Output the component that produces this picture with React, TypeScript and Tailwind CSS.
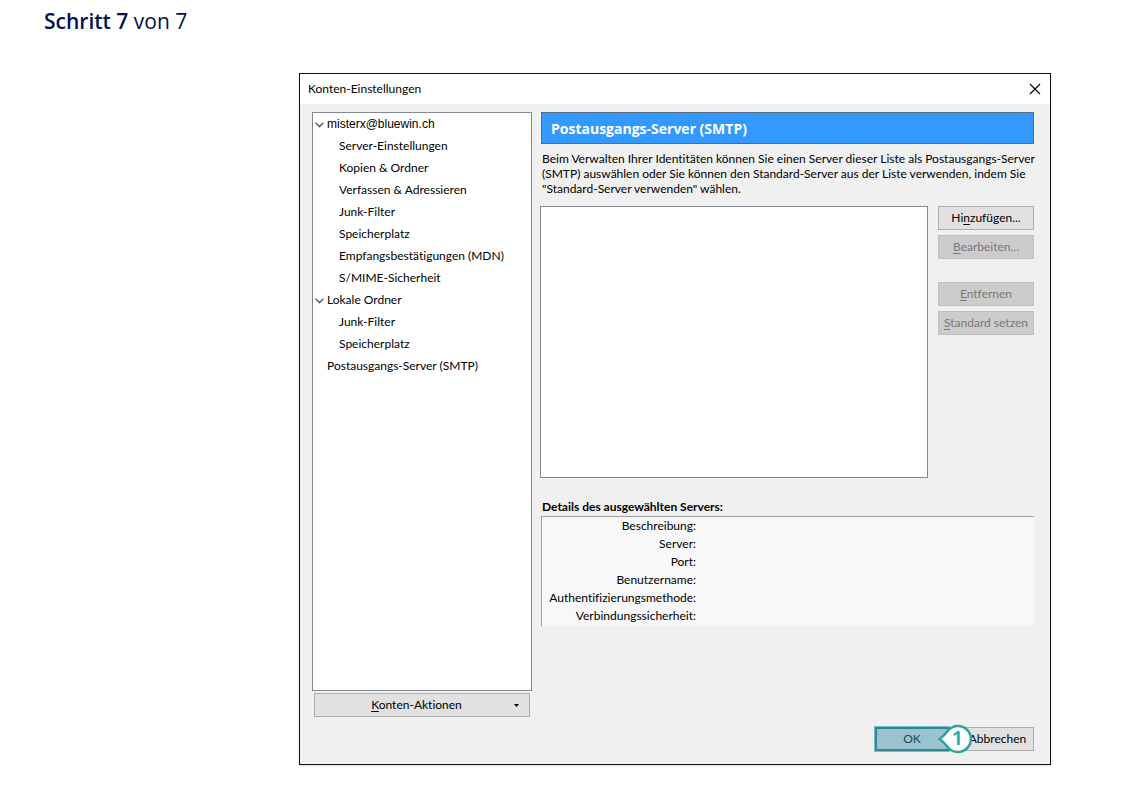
import React from "react";
import clsx from "clsx";

type Account = {
	name: string;
	plain?: boolean;
	pages: string[];
};

const accounts: Account[] = [
	{
		name: "misterx@bluewin.ch",
		plain: true,
		pages: [
			"Server-Einstellungen",
			"Kopien & Ordner",
			"Verfassen & Adressieren",
			"Junk-Filter",
			"Speicherplatz",
			"Empfangsbestätigungen (MDN)",
			"S/MIME-Sicherheit",
		],
	},
	{
		name: "Lokale Ordner",
		pages: ["Junk-Filter", "Speicherplatz"],
	},
	{ name: "Postausgangs-Server (SMTP)", pages: [] },
];

const details = [
	"Beschreibung:",
	"Server:",
	"Port:",
	"Benutzername:",
	"Authentifizierungsmethode:",
	"Verbindungssicherheit:",
];

function Twisty() {
	return (
		<svg viewBox="0 0 9 6" className="h-[6px] w-[9px]" fill="none" stroke="#606060" strokeWidth="1.5">
			<path d="M.7 .8 4.5 4.6 8.3 .8" />
		</svg>
	);
}

function DialogButton({
	label,
	accessKey,
	disabled,
	className,
}: {
	label: string;
	accessKey?: string;
	disabled?: boolean;
	className?: string;
}) {
	// underline the access key inside of the label
	const at = accessKey ? label.indexOf(accessKey) : -1;

	return (
		<button
			type="button"
			disabled={disabled}
			className={clsx(
				"h-6 border whitespace-nowrap",
				disabled
					? "border-[#bfbfbf] bg-[#cccccc] text-[#787878]"
					: "border-[#adadad] bg-[#e1e1e1] text-black",
				className
			)}
		>
			{at < 0 ? (
				label
			) : (
				<>
					{label.slice(0, at)}
					<span className="underline underline-offset-2">{label[at]}</span>
					{label.slice(at + 1)}
				</>
			)}
		</button>
	);
}

function AccountTree() {
	return (
		<ul className="min-h-[579px] border border-[#828790] bg-white leading-[22px]">
			{accounts.map((account) => (
				<li key={account.name}>
					<div className="flex items-center">
						<span className="flex w-[14px] pt-[2px] pl-[2px]">
							{account.pages.length > 0 && <Twisty />}
						</span>
						<span className={clsx(account.plain && "font-['Liberation_Sans',sans-serif]")}>
							{account.name}
						</span>
					</div>
					<ul className="pl-[26px]">
						{account.pages.map((page) => (
							<li key={page}>{page}</li>
						))}
					</ul>
				</li>
			))}
		</ul>
	);
}

function StepMarker() {
	return (
		<span className="absolute -top-[3px] left-[62px] h-[30px] w-9">
			<svg viewBox="0 0 36 30" className="h-full w-full" fill="#fff" stroke="#2fa3a3" strokeWidth="2.5">
				<path d="M2.5 15Q8 11 11.5 6A13 13 0 1 1 11.5 24Q8 19 2.5 15Z" />
			</svg>
			<span className="absolute inset-0 pl-[5px] text-center font-['Noto_Sans',sans-serif] text-[20px] leading-[28px] font-semibold text-[#2fa3a3]">
				1
			</span>
		</span>
	);
}

export default function App() {
	return (
		<main className="bg-white pr-[73px] pb-6 font-[Lato,'Noto_Sans',sans-serif] [font-variant-ligatures:none]">
			<h1 className="pt-1 pl-11 font-['Open_Sans',sans-serif] text-[21px] leading-[34px] text-[#001155]">
				<span className="font-semibold">Schritt 7</span> von 7
			</h1>

			<section
				aria-label="Konten-Einstellungen"
				className="mt-[35px] ml-[299px] border border-[#111118] bg-[#f0f0f0] text-[12px] text-black shadow-sm"
			>
				<header className="flex h-[30px] items-center justify-between bg-white pr-[9px] pl-2">
					<h2>Konten-Einstellungen</h2>
					<button type="button" aria-label="Schließen">
						<svg viewBox="0 0 12 12" className="h-3 w-3" stroke="#000" strokeWidth="1.1">
							<path d="M1 1 11 11M11 1 1 11" />
						</svg>
					</button>
				</header>

				<div className="flex gap-2 pt-2 pr-4 pl-3">
					<nav className="w-[220px] shrink-0">
						<AccountTree />
						<button
							type="button"
							className="mx-[2px] mt-[2px] flex h-6 w-[216px] items-center border border-[#adadad] bg-[#e1e1e1] pr-[10px] pl-1"
						>
							<span className="flex-1">
								<span className="underline underline-offset-2">K</span>onten-Aktionen
							</span>
							<svg viewBox="0 0 5 3" className="h-[3px] w-[5px]">
								<path d="M0 0H5L2.5 3Z" />
							</svg>
						</button>
					</nav>

					<div className="min-w-0 flex-1">
						<h3 className="ml-px flex h-8 items-center border border-[#5a6c7c] bg-[#3399ff] pl-[9px] font-['Open_Sans',sans-serif] text-[14px] font-bold text-white">
							Postausgangs-Server (SMTP)
						</h3>
						<p className="mt-[7px] -mr-3 ml-[2px] leading-[15px]">
							Beim Verwalten Ihrer Identitäten können Sie einen Server dieser Liste als Postausgangs-Server
							(SMTP) auswählen oder Sie können den Standard-Server aus der Liste verwenden, indem Sie
							"Standard-Server verwenden" wählen.
						</p>

						<div className="mt-[10px] flex gap-[10px]">
							<select
								multiple
								aria-label="Postausgangs-Server"
								className="h-[272px] min-w-0 flex-1 border border-[#828790] bg-white"
							/>
							<div className="flex w-24 flex-col">
								<DialogButton label="Hinzufügen..." accessKey="n" />
								<DialogButton label="Bearbeiten..." accessKey="B" disabled className="mt-[5px]" />
								<DialogButton label="Entfernen" accessKey="E" disabled className="mt-[23px]" />
								<DialogButton label="Standard setzen" accessKey="S" disabled className="mt-[5px]" />
							</div>
						</div>

						<h4 className="mt-5 ml-[2px] leading-[18px] font-bold">Details des ausgewählten Servers:</h4>
						<dl className="ml-px border-t border-l border-[#a0a0a0] bg-[#f8f8f8] pb-px leading-[18px]">
							{details.map((detail) => (
								<div key={detail} className="flex">
									<dt className="w-[154px] text-right">{detail}</dt>
									<dd />
								</div>
							))}
						</dl>
					</div>
				</div>

				<footer className="flex justify-end gap-3 pt-[10px] pr-4 pb-[13px]">
					<div className="relative">
						<button
							type="button"
							className="h-6 w-[74px] border-2 border-[#3a8290] bg-[repeating-linear-gradient(135deg,#9cc5cf_0px,#9cc5cf_2px,#94c0ca_2px,#94c0ca_3px)] text-[#24484f] ring-1 ring-[#6fc3c8]"
						>
							OK
						</button>
						<StepMarker />
					</div>
					<DialogButton label="Abbrechen" className="w-[73px]" />
				</footer>
			</section>
		</main>
	);
}
